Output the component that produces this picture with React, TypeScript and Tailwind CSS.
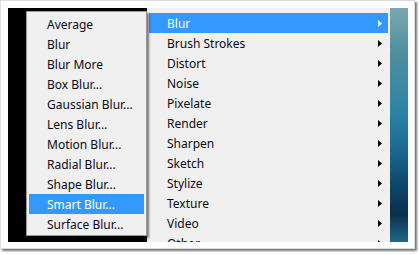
import React from 'react';

const blurItems = [
  'Average',
  'Blur',
  'Blur More',
  'Box Blur...',
  'Gaussian Blur...',
  'Lens Blur...',
  'Motion Blur...',
  'Radial Blur...',
  'Shape Blur...',
  'Smart Blur...',
  'Surface Blur...',
];

const filterItems = [
  'Artistic',
  'Blur',
  'Brush Strokes',
  'Distort',
  'Noise',
  'Pixelate',
  'Render',
  'Sharpen',
  'Sketch',
  'Stylize',
  'Texture',
  'Video',
  'Other',
];

const Arrow: React.FC<{ active?: boolean }> = ({ active }) => (
  <svg width="4" height="7" viewBox="0 0 4 7" className="shrink-0">
    <path d="M0 0 L4 3.5 L0 7 Z" fill={active ? '#ffffff' : '#000000'} />
  </svg>
);

const MenuRow: React.FC<{ label: string; active?: boolean; arrow?: boolean }> = ({ label, active, arrow }) => (
  <div
    className={`flex items-center h-[20px] pl-[18px] pr-[6px] whitespace-nowrap ${
      active ? 'bg-[#3399ff] text-white' : 'text-[#0a0a14]'
    }`}
  >
    <span className="flex-1 leading-none pt-[1px]">{label}</span>
    {arrow && <Arrow active={active} />}
  </div>
);

export default function App() {
  return (
    <div
      className="w-[420px] h-[255px] bg-white"
      style={{ fontFamily: '"Noto Sans", "Open Sans", sans-serif' }}
    >
      <div className="w-[415px] h-[249px] bg-white border border-[#dcdcdc] shadow-[2px_2px_2px_rgba(0,0,0,0.55)] pt-[7px] pl-[7px]">
        {/* screenshot area */}
        <div className="flex w-[400px] h-[234px] overflow-hidden text-[12px]">
          {/* black background with Blur submenu */}
          <div className="w-[139px] h-full bg-black pt-[3px] pl-[18px] relative z-10">
            <div className="w-[121px] h-[225px] bg-[#f0f0f0] border border-[#979797] shadow-[2px_2px_2px_rgba(0,0,0,0.5)] pt-[2px] px-[2px]">
              {blurItems.map((item) => (
                <MenuRow key={item} label={item} active={item === 'Smart Blur...'} />
              ))}
            </div>
          </div>

          {/* Filter menu */}
          <div className="w-[243px] h-full bg-[#f0f0f0] px-[2px]">
            <div className="-mt-[15px]">
              {filterItems.map((item) => (
                <MenuRow key={item} label={item} active={item === 'Blur'} arrow />
              ))}
            </div>
          </div>

          {/* photo behind */}
          <div className="w-[18px] h-full bg-[linear-gradient(180deg,#7aa8ae_0%,#4d8e9e_20%,#2f86a6_42%,#1e6f95_58%,#0f4a70_74%,#0b2f4d_88%,#1c6a8a_100%)]" />
        </div>
      </div>
    </div>
  );
}
